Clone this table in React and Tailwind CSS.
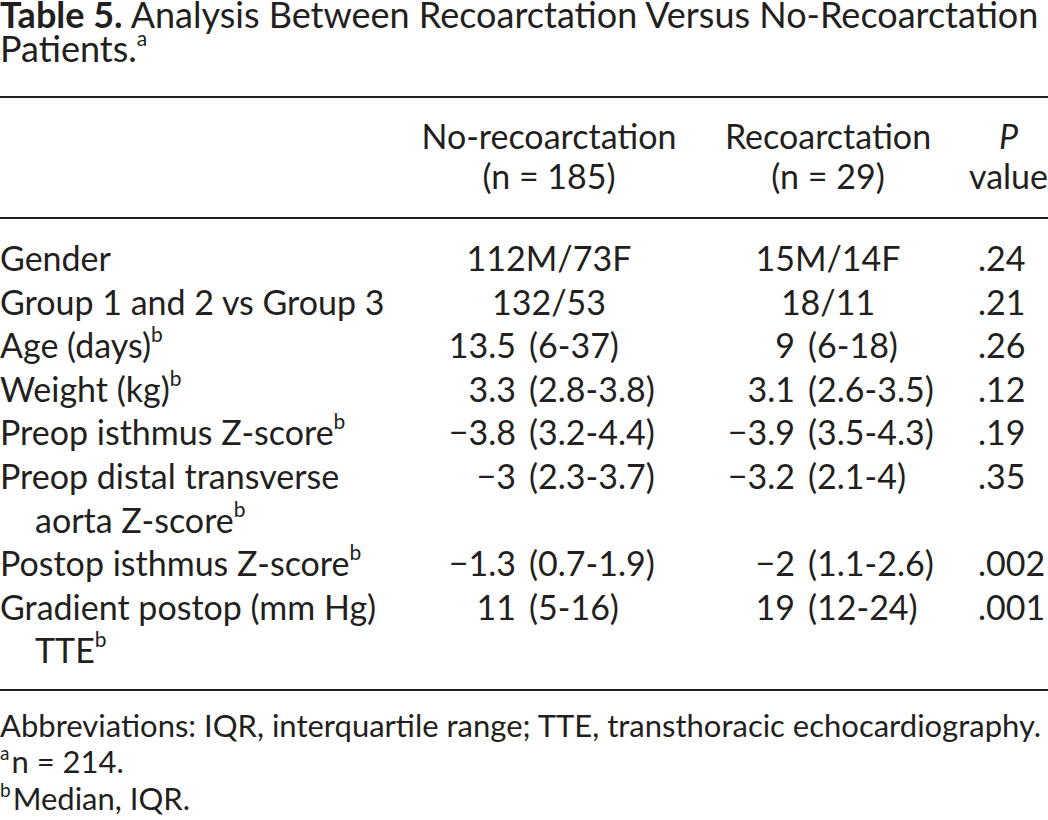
const rows = [
  { label: ['Gender'], a: '112M/73F', b: '15M/14F', p: '.24', span: true },
  { label: ['Group 1 and 2 vs Group 3'], a: '132/53', b: '18/11', p: '.21', span: true },
  { label: ['Age (days)'], sup: true, a: ['13.5', '(6-37)'], b: ['9', '(6-18)'], p: '.26' },
  { label: ['Weight (kg)'], sup: true, a: ['3.3', '(2.8-3.8)'], b: ['3.1', '(2.6-3.5)'], p: '.12' },
  { label: ['Preop isthmus Z-score'], sup: true, a: ['\u22123.8', '(3.2-4.4)'], b: ['\u22123.9', '(3.5-4.3)'], p: '.19' },
  { label: ['Preop distal transverse', 'aorta Z-score'], sup: true, a: ['\u22123', '(2.3-3.7)'], b: ['\u22123.2', '(2.1-4)'], p: '.35' },
  { label: ['Postop isthmus Z-score'], sup: true, a: ['\u22121.3', '(0.7-1.9)'], b: ['\u22122', '(1.1-2.6)'], p: '.002' },
  { label: ['Gradient postop (mm Hg)', 'TTE'], sup: true, a: ['11', '(5-16)'], b: ['19', '(12-24)'], p: '.001' },
]

// raised note marks, sized like the printed table
function Sup({ children }) {
  return <sup className="text-[21px] -top-[16px]">{children}</sup>
}

function NoteMark({ children }) {
  return <sup className="text-[19px] -top-[13px] pr-[2px]">{children}</sup>
}

export default function App() {
  return (
    <div className="w-[1048px] h-[820px] overflow-hidden bg-white text-[#231f20] font-[Lato,sans-serif]">
      <div className="text-[36px]">
        <div className="whitespace-nowrap leading-[28px]"><span className="font-bold">Table 5.</span> Analysis Between Recoarctation Versus No-Recoarctation</div>
        <div className="leading-[40px]">Patients.<Sup>a</Sup></div>
      </div>

      <table className="mt-[28px] w-[1048px] table-fixed border-collapse text-[34px] leading-[43.6px]">
        <colgroup>
          <col className="w-[400px]" />
          <col className="w-[116px]" />
          <col className="w-[182px]" />
          <col className="w-[97px]" />
          <col className="w-[163px]" />
          <col className="w-[90px]" />
        </colgroup>
        <thead>
          <tr className="border-y-2 border-[#231f20] leading-[40px]">
            <th className="pt-[18px] pb-[21px]"></th>
            <th colSpan={2} className="pt-[18px] pb-[21px] font-normal text-center">No-recoarctation<br />(n = 185)</th>
            <th colSpan={2} className="pt-[18px] pb-[21px] font-normal text-center">Recoarctation<br />(n = 29)</th>
            <th className="pt-[18px] pb-[21px] font-normal text-right">
              <div className="inline-block text-center"><i>P</i><br />value</div>
            </th>
          </tr>
        </thead>
        <tbody className="border-b-2 border-[#231f20]">
          {rows.map((r, i) => {
            const pad = i === 0 ? 'pt-[17px]' : i === rows.length - 1 ? 'pb-[17px]' : ''
            return (
              <tr key={i}>
                <td className={`align-top whitespace-nowrap ${pad}`}>
                  {r.label.map((l, j) => (
                    <div key={j} className={j > 0 ? 'pl-[35px]' : ''}>
                      {l}
                      {r.sup && j === r.label.length - 1 && <Sup>b</Sup>}
                    </div>
                  ))}
                </td>
                {r.span ? (
                  <>
                    <td colSpan={2} className={`align-top text-center ${pad}`}>{r.a}</td>
                    <td colSpan={2} className={`align-top text-center ${pad}`}>{r.b}</td>
                  </>
                ) : (
                  <>
                    <td className={`align-top text-right whitespace-nowrap ${pad}`}>{r.a[0]}</td>
                    <td className={`align-top pl-[13px] whitespace-nowrap ${pad}`}>{r.a[1]}</td>
                    <td className={`align-top text-right whitespace-nowrap ${pad}`}>{r.b[0]}</td>
                    <td className={`align-top pl-[13px] whitespace-nowrap ${pad}`}>{r.b[1]}</td>
                  </>
                )}
                <td className={`align-top pl-[20px] ${pad}`}>{r.p}</td>
              </tr>
            )
          })}
        </tbody>
      </table>

      <div className="pt-[16px] text-[31px] leading-[36.5px]">
        <div className="whitespace-nowrap">Abbreviations: IQR, interquartile range; TTE, transthoracic echocardiography.</div>
        <div><NoteMark>a</NoteMark>n = 214.</div>
        <div><NoteMark>b</NoteMark>Median, IQR.</div>
      </div>
    </div>
  )
}
